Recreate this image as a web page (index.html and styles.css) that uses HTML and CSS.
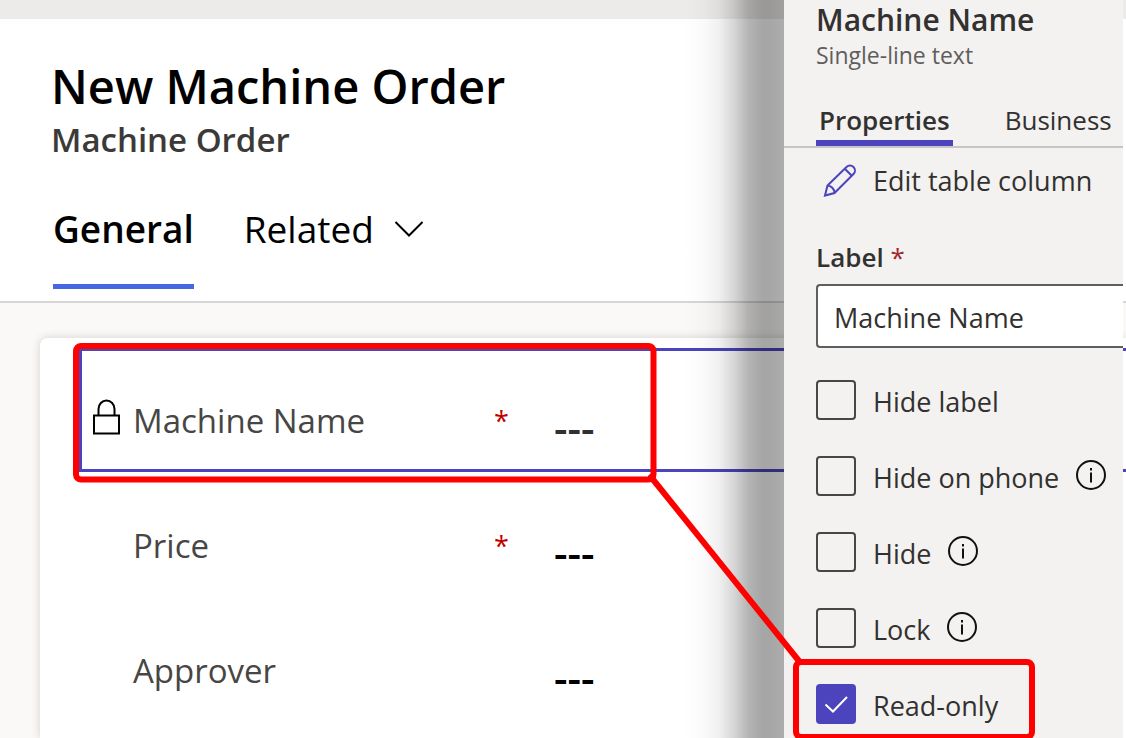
FILE: index.html
```html
<!DOCTYPE html>
<html lang="en">
<head>
<meta charset="utf-8">
<meta name="viewport" content="width=device-width, initial-scale=1">
<title>New Machine Order</title>
<link rel="stylesheet" href="styles.css">
</head>
<body>
<div class="screen">
  <main class="form">
    <div class="topbar"></div>
    <header class="form-header">
      <h1 class="form-title">New Machine Order</h1>
      <p class="form-entity">Machine Order</p>
      <nav class="form-tabs">
        <button class="form-tab form-tab-active" type="button">General</button>
        <button class="form-tab" type="button">Related
          <svg class="chevron" viewBox="0 0 30 18" aria-hidden="true"><path d="M1.500 2 15 15.500 28.500 2"/></svg>
        </button>
      </nav>
    </header>
    <section class="form-body">
      <div class="card">
        <div class="field field-selected">
          <svg class="lock" viewBox="0 0 28 36" aria-hidden="true"><path d="M2 16.500h25v18H2zM6.500 16.500V10a8 8.500 0 0 1 16 0v6.500"/></svg>
          <span class="field-name">Machine Name</span>
          <span class="required">*</span>
          <span class="field-value field-value-locked">---</span>
        </div>
        <div class="field">
          <span class="field-name">Price</span>
          <span class="required">*</span>
          <span class="field-value">---</span>
        </div>
        <div class="field">
          <span class="field-name">Approver</span>
          <span class="field-value">---</span>
        </div>
      </div>
    </section>
  </main>

  <aside class="panel">
    <div class="panel-shade"></div>
    <div class="panel-content">
      <h2 class="panel-title">Machine Name</h2>
      <p class="panel-type">Single-line text</p>
      <nav class="panel-tabs">
        <button class="panel-tab panel-tab-active" type="button">Properties</button>
        <button class="panel-tab" type="button">Business</button>
      </nav>
      <div class="properties">
        <button class="edit" type="button">
          <svg class="pencil" viewBox="0 0 34 34" aria-hidden="true"><path d="M2 31.500 4.500 21.500 23.500 3a4.900 4.900 0 0 1 7 7L11.500 29ZM21.800 4.700l7 7M4.500 21.500c3.500 0 7 3.500 7 7.500"/></svg>
          Edit table column
        </button>
        <label class="input-label" for="label">Label <span class="input-required">*</span></label>
        <input class="input" id="label" type="text" value="Machine Name">
        <div class="options">
          <div class="option">
            <input class="check" id="hide-label" type="checkbox">
            <label for="hide-label">Hide label</label>
          </div>
          <div class="option">
            <input class="check" id="hide-phone" type="checkbox">
            <label for="hide-phone">Hide on phone</label>
            <svg class="info" viewBox="0 0 30 30" aria-hidden="true"><circle cx="15" cy="15" r="14"/><path d="M15 12.500v10M15 8v2.400"/></svg>
          </div>
          <div class="option">
            <input class="check" id="hide" type="checkbox">
            <label for="hide">Hide</label>
            <svg class="info" viewBox="0 0 30 30" aria-hidden="true"><circle cx="15" cy="15" r="14"/><path d="M15 12.500v10M15 8v2.400"/></svg>
          </div>
          <div class="option">
            <input class="check" id="lock" type="checkbox">
            <label for="lock">Lock</label>
            <svg class="info" viewBox="0 0 30 30" aria-hidden="true"><circle cx="15" cy="15" r="14"/><path d="M15 12.500v10M15 8v2.400"/></svg>
          </div>
          <div class="option">
            <span class="check-wrap">
              <input class="check" id="read-only" type="checkbox" checked>
              <svg class="tick" viewBox="0 0 40 40" aria-hidden="true"><path d="M9.500 20.500 17 27.500 31 13"/></svg>
            </span>
            <label for="read-only">Read-only</label>
          </div>
        </div>
      </div>
    </div>
  </aside>

  <svg class="callout" width="1126" height="738" viewBox="0 0 1126 738" aria-hidden="true">
    <rect x="76" y="346" width="577.500" height="133.500" rx="5"/>
    <path d="M651 477 799 661"/>
    <rect x="796" y="662" width="236" height="75" rx="5"/>
  </svg>
</div>
</body>
</html>
```

FILE: styles.css
```css
* { box-sizing: border-box; }

body {
  margin: 0;
  font-family: "Open Sans", "Noto Sans", sans-serif;
  color: #323130;
  background: #fff;
}

h1, h2, p { margin: 0; }

button {
  padding: 0;
  border: 0;
  background: none;
  color: inherit;
  font: inherit;
  white-space: nowrap;
}

svg { fill: none; flex: none; }

/* The form and the property panel share one grid cell; the panel floats on top. */
.screen {
  position: relative;
  display: grid;
  grid-template: 100vh / 100%;
  overflow: hidden;
}

.form, .panel { grid-area: 1 / 1; min-height: 0; }

.form {
  display: flex;
  flex-direction: column;
  color: #000;
}

.topbar { height: 19px; background: #edebe9; flex: none; }

.form-header {
  flex: none;
  padding: 35px 0 12px 51px;
  border-bottom: 2px solid #d6d6d6;
}

.form-title { font-size: 47px; line-height: 64px; font-weight: 600; }

.form-entity {
  font-size: 33px;
  line-height: 44px;
  font-weight: 600;
  color: #3b3a39;
}

.form-tabs { display: flex; gap: 50px; padding: 37px 0 0 2px; }

.form-tab {
  display: flex;
  align-items: center;
  gap: 20px;
  padding: 6px 0 31px;
  border-bottom: 5px solid transparent;
  font-size: 37px;
  line-height: 48px;
}

.form-tab-active { font-weight: 600; border-color: #4668e2; }

.chevron { width: 30px; height: 18px; stroke: #000; stroke-width: 2; }

.form-body {
  flex: 1;
  min-height: 0;
  display: grid;
  padding: 35px 0 0 40px;
  background: #faf9f8;
}

.card {
  display: flex;
  flex-direction: column;
  gap: 1px;
  padding: 10px 0 0 39px;
  border-radius: 8px 0 0 0;
  background: #fff;
  box-shadow: 0 0 10px rgba(0, 0, 0, 0.16);
}

.field {
  position: relative;
  flex: none;
  display: grid;
  grid-template-columns: 361px 60px 1fr;
  align-items: center;
  height: 124px;
  padding: 22px 0 0 54px;
  font-size: 33px;
  line-height: 48px;
}

.field-selected { box-shadow: inset 3px 3px #4b44bd, inset 0 -3px #4b44bd; }

.lock {
  position: absolute;
  left: 13px;
  top: 51px;
  width: 28px;
  height: 36px;
  stroke: #000;
  stroke-width: 2;
}

.field-name { color: #484644; }
.required { color: #c00000; font-size: 27px; }

.field-value {
  grid-column: 3;
  padding-top: 12px;
  font-size: 42px;
  font-weight: 600;
}

.field-value-locked { color: #323130; }

.panel {
  justify-self: end;
  position: relative;
  width: 339px;
  margin-right: 3px;
}

.panel-shade {
  position: absolute;
  top: 0;
  bottom: 0;
  right: 100%;
  width: 100px;
  background: linear-gradient(to right,
    rgba(0, 0, 0, 0) 0%,
    rgba(0, 0, 0, 0.02) 20%,
    rgba(0, 0, 0, 0.06) 35%,
    rgba(0, 0, 0, 0.16) 50%,
    rgba(0, 0, 0, 0.29) 64%,
    rgba(0, 0, 0, 0.35) 78%,
    rgba(0, 0, 0, 0.35) 86%,
    rgba(0, 0, 0, 0.32) 100%);
}

.panel-content {
  height: 100%;
  overflow: hidden;
  background: #f3f2f1;
}

.panel-title {
  padding-left: 32px;
  font-size: 30px;
  line-height: 39px;
  font-weight: 600;
}

.panel-type {
  padding-left: 32px;
  font-size: 23px;
  line-height: 32px;
  color: #605e5c;
}

.panel-tabs {
  display: flex;
  gap: 49px;
  padding: 29px 0 0 32px;
  border-bottom: 2px solid #c8c6c4;
}

.panel-tab {
  padding: 0 3px;
  border-bottom: 6px solid transparent;
  font-size: 26px;
  line-height: 40px;
}

.panel-tab-active { font-weight: 600; border-color: #4b44bd; }

.properties { padding: 10px 0 0 32px; }

.edit {
  display: flex;
  align-items: center;
  gap: 16px;
  padding-left: 7px;
  font-size: 27px;
  line-height: 46px;
}

.pencil { width: 34px; height: 34px; stroke: #4b44bd; stroke-width: 2; }

.input-label {
  display: block;
  padding-top: 33px;
  font-size: 26px;
  line-height: 40px;
  font-weight: 600;
}

.input-required { color: #a4262c; font-weight: 400; }

.input {
  display: block;
  width: 100%;
  height: 64px;
  margin-top: 7px;
  padding: 2px 16px 0;
  border: 2px solid #605e5c;
  border-right: 0;
  border-radius: 4px 0 0 4px;
  background: #fff;
  color: inherit;
  font: inherit;
  font-size: 27px;
}

.options { padding-top: 14px; }

.option {
  display: flex;
  align-items: center;
  gap: 17px;
  height: 76px;
  font-size: 27px;
  line-height: 40px;
  white-space: nowrap;
}

.option label { padding-top: 3px; }

.check {
  appearance: none;
  display: block;
  width: 40px;
  height: 40px;
  margin: 0;
  border: 2px solid #484644;
  border-radius: 4px;
}

.check:checked { border-color: #4b44bd; background: #4b44bd; }

.check-wrap { position: relative; }

.tick {
  position: absolute;
  inset: 0;
  stroke: #fff;
  stroke-width: 2;
  pointer-events: none;
}

.info { width: 30px; height: 30px; margin-bottom: 2px; stroke: #111; stroke-width: 2; }

.callout {
  position: absolute;
  top: 0;
  left: 0;
  stroke: #f00;
  stroke-width: 6;
  stroke-linecap: round;
  pointer-events: none;
}
```
